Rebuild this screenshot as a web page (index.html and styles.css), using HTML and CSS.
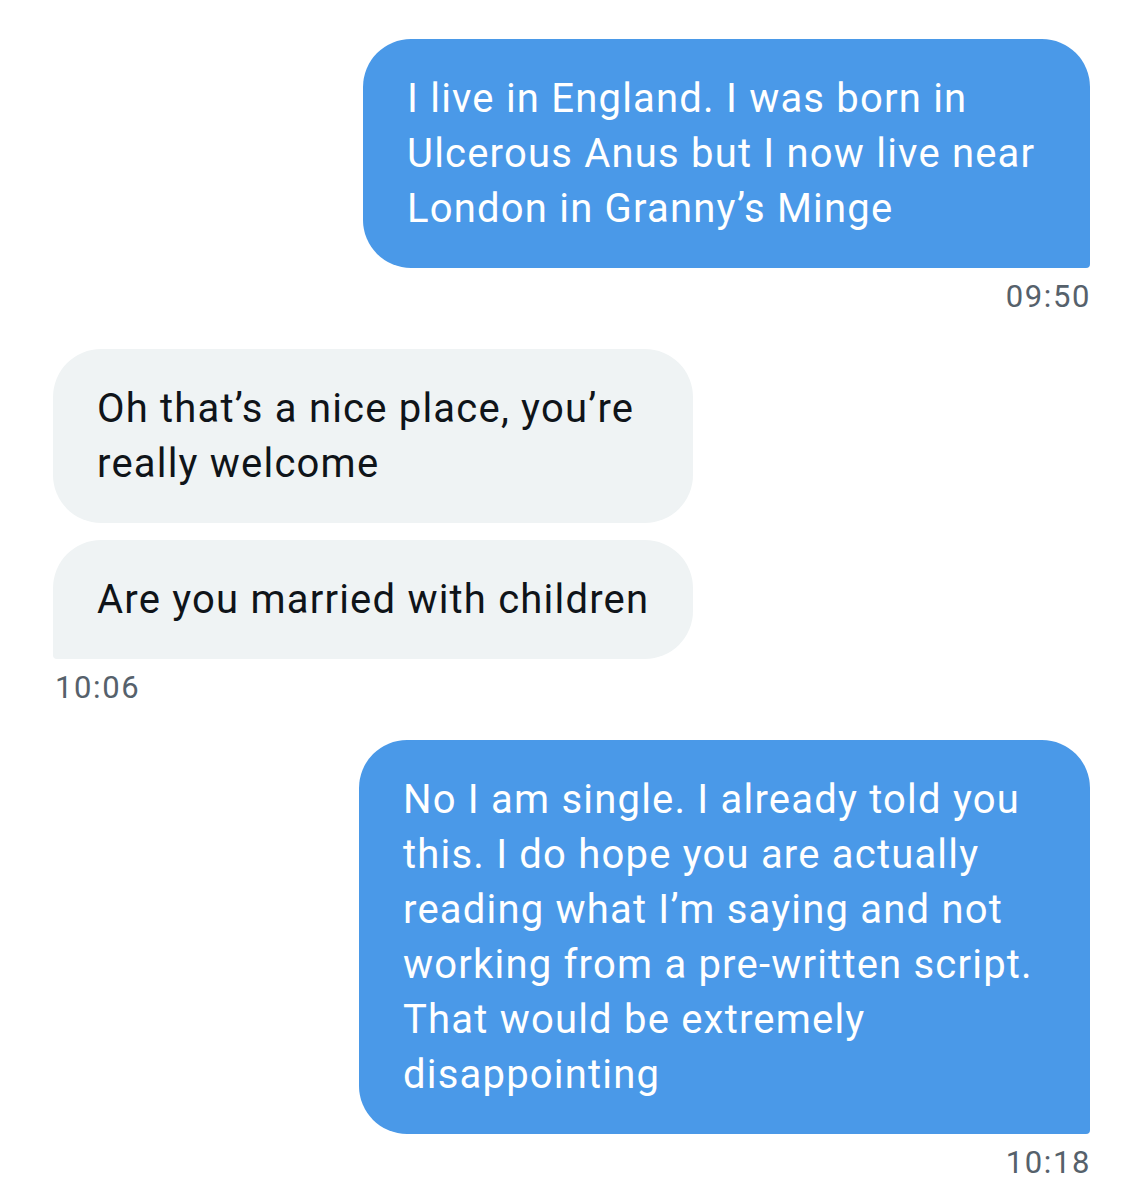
FILE: index.html
```html
<!DOCTYPE html>
<html lang="en">
<head>
<meta charset="utf-8">
<title>Messages</title>
<link rel="stylesheet" href="styles.css">
</head>
<body>
<main class="thread">
  <div class="group group-out">
    <div class="bubble bubble-out b1">I live in England. I was born in Ulcerous Anus but I now live near London in Granny’s Minge</div>
    <div class="time">09:50</div>
  </div>
  <div class="group group-in">
    <div class="bubble bubble-in first b2">Oh that’s a nice place, you’re really welcome</div>
    <div class="bubble bubble-in last b2">Are you married with children</div>
    <div class="time">10:06</div>
  </div>
  <div class="group group-out">
    <div class="bubble bubble-out b3">No I am single. I already told you this. I do hope you are actually reading what I’m saying and not working from a pre-written script. That would be extremely disappointing</div>
    <div class="time">10:18</div>
  </div>
</main>
</body>
</html>
```

FILE: styles.css
```css
* { box-sizing: border-box; }
html, body { margin: 0; padding: 0; background: #ffffff; }
body {
  font-family: Roboto, "Liberation Sans", sans-serif;
  width: 1143px;
  height: 1200px;
  overflow: hidden;
}
.thread {
  display: flex;
  flex-direction: column;
  gap: 32px;
  padding: 39px 53px 0 53px;
}
.group {
  display: flex;
  flex-direction: column;
  gap: 17px;
}
.group-out { align-items: flex-end; }
.group-in { align-items: flex-start; }
.bubble {
  font-size: 40px;
  line-height: 55px;
  letter-spacing: 1.2px;
  padding: 32px 36px 32px 44px;
  border-radius: 48px;
}
.bubble-out {
  background: #4a99e8;
  color: #ffffff;
  border-bottom-right-radius: 4px;
}
.bubble-in {
  background: #eff3f4;
  color: #0f1419;
}
.bubble-in.first { border-bottom-left-radius: 48px; }
.bubble-in.last { border-bottom-left-radius: 4px; }
.b1 { width: 727px; }
.b2 { width: 640px; padding-right: 30px; }
.b3 { width: 731px; }
.time {
  font-size: 31px;
  line-height: 40px;
  letter-spacing: 1.6px;
  color: #56616b;
  margin-top: -8px;
  padding: 0 0 0 2px;
}
.group-out .time { margin-right: -1px; }
```
